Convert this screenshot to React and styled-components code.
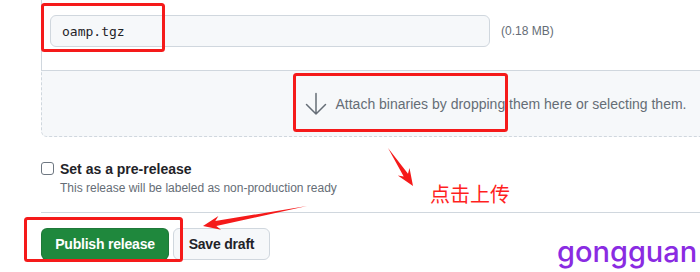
import styled, { createGlobalStyle } from "styled-components";

const GlobalStyle = createGlobalStyle`
    html, body {
        margin: 0;
        padding: 0;
        overflow: hidden;
        background: #ffffff;
    }
    body {
        font-family: "Liberation Sans", Arial, sans-serif;
        color: #1f2328;
    }
`;

const Page = styled.div`
    position: relative;
    width: 700px;
    height: 272px;
    overflow: hidden;
    background: #ffffff;
`;

const Content = styled.div`
    padding-left: 41px;
    width: 1000px;
`;

const AssetBox = styled.div`
    width: 908px;
`;

const FileRow = styled.div`
    display: flex;
    align-items: center;
    padding: 15px 8px 23px;
    border-left: 1px solid #d0d7de;
    border-right: 1px solid #d0d7de;
`;

const FileName = styled.div`
    box-sizing: border-box;
    width: 440px;
    height: 32px;
    display: flex;
    align-items: center;
    padding-left: 11px;
    background: #f6f8fa;
    border: 1px solid #d0d7de;
    border-radius: 6px;
    font-family: "DejaVu Sans Mono", "Liberation Mono", monospace;
    font-size: 13px;
    color: #1f2328;
`;

const FileSize = styled.span`
    margin-left: 11px;
    font-size: 12px;
    color: #656d76;
`;

const DropZone = styled.div`
    box-sizing: border-box;
    height: 67px;
    display: flex;
    align-items: center;
    justify-content: center;
    gap: 8px;
    background: #f6f8fa;
    border: 1px dashed #d0d7de;
    border-top: 1px solid #d0d7de;
    border-radius: 0 0 6px 6px;
    font-size: 14px;
    color: #656d76;
`;

const CheckRow = styled.div`
    display: flex;
    align-items: flex-start;
    gap: 6px;
    margin-top: 22px;
`;

const Checkbox = styled.span`
    box-sizing: border-box;
    width: 13px;
    height: 13px;
    margin-top: 3px;
    border: 1px solid #6e7781;
    border-radius: 3px;
    background: #ffffff;
    flex: none;
`;

const CheckLabel = styled.div`
    font-size: 14px;
    font-weight: 700;
    line-height: 20px;
    color: #1f2328;
`;

const CheckNote = styled.div`
    font-size: 12px;
    line-height: 18px;
    font-weight: 400;
    color: #656d76;
`;

const Footer = styled.div`
    display: flex;
    gap: 4px;
    margin-top: 15px;
    padding-top: 15px;
    border-top: 1px solid #d0d7de;
`;

const Button = styled.button`
    box-sizing: border-box;
    display: flex;
    align-items: center;
    justify-content: center;
    height: 32px;
    width: ${p => p.$width}px;
    padding: 0;
    border-radius: 6px;
    font-family: inherit;
    font-size: 14px;
    font-weight: 700;
    letter-spacing: -0.2px;
    white-space: nowrap;
    border: 1px solid ${p => (p.$primary ? "rgba(31,35,40,0.15)" : "#d0d7de")};
    background: ${p => (p.$primary ? "#1f883d" : "#f6f8fa")};
    color: ${p => (p.$primary ? "#ffffff" : "#1f2328")};
`;

const Overlay = styled.svg`
    position: absolute;
    left: 0;
    top: 0;
    pointer-events: none;
`;

const Note = styled.div`
    position: absolute;
    left: 430px;
    top: 181px;
    font-family: "Noto Sans CJK SC", sans-serif;
    font-size: 20px;
    line-height: 26px;
    color: #ff1f1f;
`;

const Watermark = styled.div`
    position: absolute;
    left: 557px;
    top: 234px;
    font-family: Inter, "Liberation Sans", sans-serif;
    font-size: 29px;
    font-weight: 500;
    line-height: 36px;
    color: #8a2be2;
    white-space: nowrap;
`;

const ArrowDownIcon = () => (
    <svg width="24" height="24" viewBox="0 0 24 24" fill="none" stroke="#656d76"
         strokeWidth="1.5" strokeLinecap="round" strokeLinejoin="round">
        <path d="M12 1.5V22M2.5 12.5L12 22l9.5-9.5"/>
    </svg>
);

// tapered annotation arrow, points computed from tail/tip
const arrowPoints = (x1, y1, x2, y2) => {
    const dx = x2 - x1, dy = y2 - y1;
    const len = Math.hypot(dx, dy);
    const ux = dx / len, uy = dy / len;
    const nx = -uy, ny = ux;
    const local = [
        [0, 0],
        [len - 13, -2.6],
        [len - 17, -7],
        [len, 0],
        [len - 17, 7],
        [len - 13, 2.6],
    ];
    return local
        .map(([a, b]) => `${(x1 + ux * a + nx * b).toFixed(1)},${(y1 + uy * a + ny * b).toFixed(1)}`)
        .join(" ");
};

const redBoxes = [
    {x: 42.5, y: 4.5, w: 121, h: 46},
    {x: 294.5, y: 74.5, w: 212, h: 56},
    {x: 25.5, y: 218.5, w: 156, h: 42},
];

export default function App() {
    return (
        <Page>
            <GlobalStyle/>
            <Content>
                <AssetBox>
                    <FileRow>
                        <FileName>oamp.tgz</FileName>
                        <FileSize>(0.18 MB)</FileSize>
                    </FileRow>
                    <DropZone>
                        <ArrowDownIcon/>
                        <span>Attach binaries by dropping them here or selecting them.</span>
                    </DropZone>
                </AssetBox>
                <CheckRow>
                    <Checkbox/>
                    <div>
                        <CheckLabel>Set as a pre-release</CheckLabel>
                        <CheckNote>This release will be labeled as non-production ready</CheckNote>
                    </div>
                </CheckRow>
                <Footer>
                    <Button $primary $width={128}>Publish release</Button>
                    <Button $width={97}>Save draft</Button>
                </Footer>
            </Content>

            <Overlay width="700" height="272">
                {redBoxes.map((b, i) => (
                    <rect key={i} x={b.x} y={b.y} width={b.w} height={b.h} rx="2"
                          fill="none" stroke="#f51a1a" strokeWidth="3"/>
                ))}
                <polygon points={arrowPoints(388, 148, 413, 186)} fill="#f51a1a"/>
                <polygon points={arrowPoints(307, 206, 203, 226)} fill="#f51a1a"/>
            </Overlay>
            <Note>点击上传</Note>
            <Watermark>gongguan</Watermark>
        </Page>
    );
}
